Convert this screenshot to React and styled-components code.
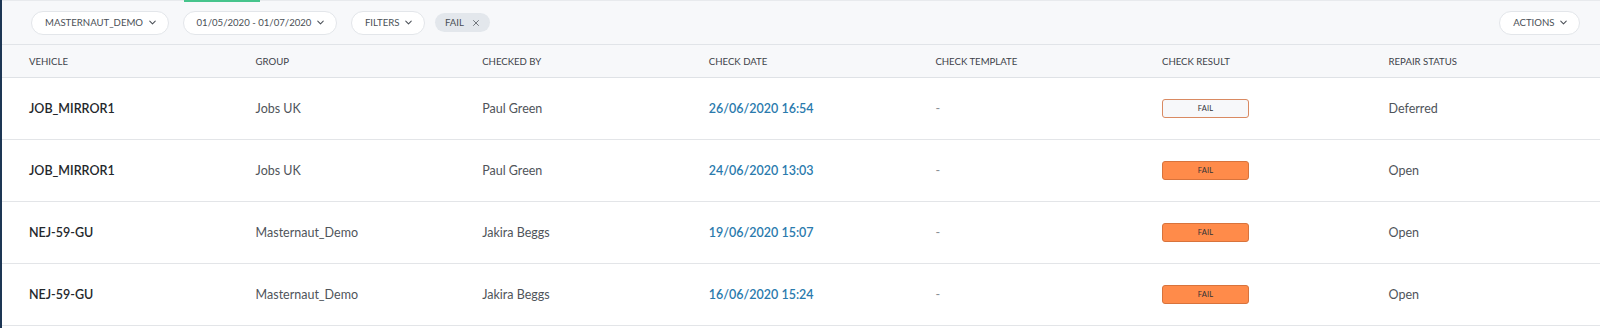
import React from "react";
import styled, { createGlobalStyle } from "styled-components";
import { ChevronDown, X } from "lucide-react";

const GlobalStyle = createGlobalStyle`
  html, body {
    margin: 0;
    padding: 0;
    background: #ffffff;
    font-family: "Lato", "Open Sans", sans-serif;
  }
`;

const Page = styled.div`
  width: 1600px;
  height: 328px;
  overflow: hidden;
  display: flex;
  background: #fff;
`;

const Edge = styled.div`
  width: 2px;
  flex: none;
  background: #1d3654;
`;

const Main = styled.div`
  flex: 1;
  display: flex;
  flex-direction: column;
  min-width: 0;
`;

const Toolbar = styled.div`
  position: relative;
  height: 43px;
  display: flex;
  align-items: center;
  gap: 14px;
  padding: 0 20px 0 29px;
  background: #f7f8fa;
  border-top: 1px solid #e8eaed;
  border-bottom: 1px solid #e1e4e8;
  box-sizing: content-box;
`;

const ActiveTab = styled.span`
  position: absolute;
  top: -1px;
  left: 182px;
  width: 76px;
  height: 2px;
  background: #46c48c;
`;

const Pill = styled.button`
  height: 24px;
  display: inline-flex;
  align-items: center;
  gap: 3.5px;
  padding: 0 10px 0 13px;
  border: 1px solid #e3e6ea;
  border-radius: 12px;
  background: #fff;
  color: #4a4f56;
  font-family: inherit;
  font-size: 9.6px;
  cursor: pointer;
  svg {
    color: #4a4f56;
  }
`;

const Chip = styled.span`
  height: 19px;
  display: inline-flex;
  align-items: center;
  gap: 7px;
  padding: 0 9px 0 10px;
  margin-left: -4px;
  border-radius: 10px;
  background: #e3e7ec;
  color: #4a4f56;
  font-size: 9.6px;
`;

const Spacer = styled.div`
  flex: 1;
`;

const Grid = styled.div`
  display: grid;
  grid-template-columns: repeat(7, 226.6px);
  padding-left: 27px;
  align-items: center;
`;

const HeaderRow = styled(Grid)`
  height: 32px;
  background: #f7f8fa;
  border-bottom: 1px solid #dfe2e6;
`;

const HeadCell = styled.div`
  font-size: 9.6px;
  color: #3d4249;
`;

const Row = styled(Grid)`
  height: 61px;
  border-bottom: 1px solid #e3e5e8;
`;

const Cell = styled.div`
  font-size: 12.5px;
  color: ${(p) => p.$color || "#4f545a"};
  font-weight: ${(p) => (p.$bold ? 600 : 400)};
`;

const Badge = styled.div`
  width: 85px;
  height: 17px;
  display: flex;
  align-items: center;
  justify-content: center;
  border-radius: 3px;
  border: 1px solid ${(p) => (p.$filled ? "#d8733c" : "#d98a62")};
  background: ${(p) => (p.$filled ? "#ff8b4a" : "#f7f8fa")};
  color: #2f3236;
  font-size: 7.5px;
  letter-spacing: 0.2px;
`;

const columns = [
  "VEHICLE",
  "GROUP",
  "CHECKED BY",
  "CHECK DATE",
  "CHECK TEMPLATE",
  "CHECK RESULT",
  "REPAIR STATUS",
];

const rows = [
  {
    vehicle: "JOB_MIRROR1",
    group: "Jobs UK",
    by: "Paul Green",
    date: "26/06/2020 16:54",
    filled: false,
    status: "Deferred",
  },
  {
    vehicle: "JOB_MIRROR1",
    group: "Jobs UK",
    by: "Paul Green",
    date: "24/06/2020 13:03",
    filled: true,
    status: "Open",
  },
  {
    vehicle: "NEJ-59-GU",
    group: "Masternaut_Demo",
    by: "Jakira Beggs",
    date: "19/06/2020 15:07",
    filled: true,
    status: "Open",
  },
  {
    vehicle: "NEJ-59-GU",
    group: "Masternaut_Demo",
    by: "Jakira Beggs",
    date: "16/06/2020 15:24",
    filled: true,
    status: "Open",
  },
];

export default function App() {
  return (
    <>
      <GlobalStyle />
      <Page>
        <Edge />
        <Main>
          <Toolbar>
            <ActiveTab />
            <Pill>
              MASTERNAUT_DEMO <ChevronDown size={11} strokeWidth={2.2} />
            </Pill>
            <Pill>
              01/05/2020 - 01/07/2020 <ChevronDown size={11} strokeWidth={2.2} />
            </Pill>
            <Pill>
              FILTERS <ChevronDown size={11} strokeWidth={2.2} />
            </Pill>
            <Chip>
              FAIL <X size={10} strokeWidth={1.8} />
            </Chip>
            <Spacer />
            <Pill>
              ACTIONS <ChevronDown size={11} strokeWidth={2.2} />
            </Pill>
          </Toolbar>
          <HeaderRow>
            {columns.map((c) => (
              <HeadCell key={c}>{c}</HeadCell>
            ))}
          </HeaderRow>
          {rows.map((r, i) => (
            <Row key={i}>
              <Cell $bold $color="#24272b">
                {r.vehicle}
              </Cell>
              <Cell>{r.group}</Cell>
              <Cell>{r.by}</Cell>
              <Cell $bold $color="#2a7aad">
                {r.date}
              </Cell>
              <Cell $color="#8a8f95">-</Cell>
              <div>
                <Badge $filled={r.filled}>FAIL</Badge>
              </div>
              <Cell>{r.status}</Cell>
            </Row>
          ))}
        </Main>
      </Page>
    </>
  );
}
